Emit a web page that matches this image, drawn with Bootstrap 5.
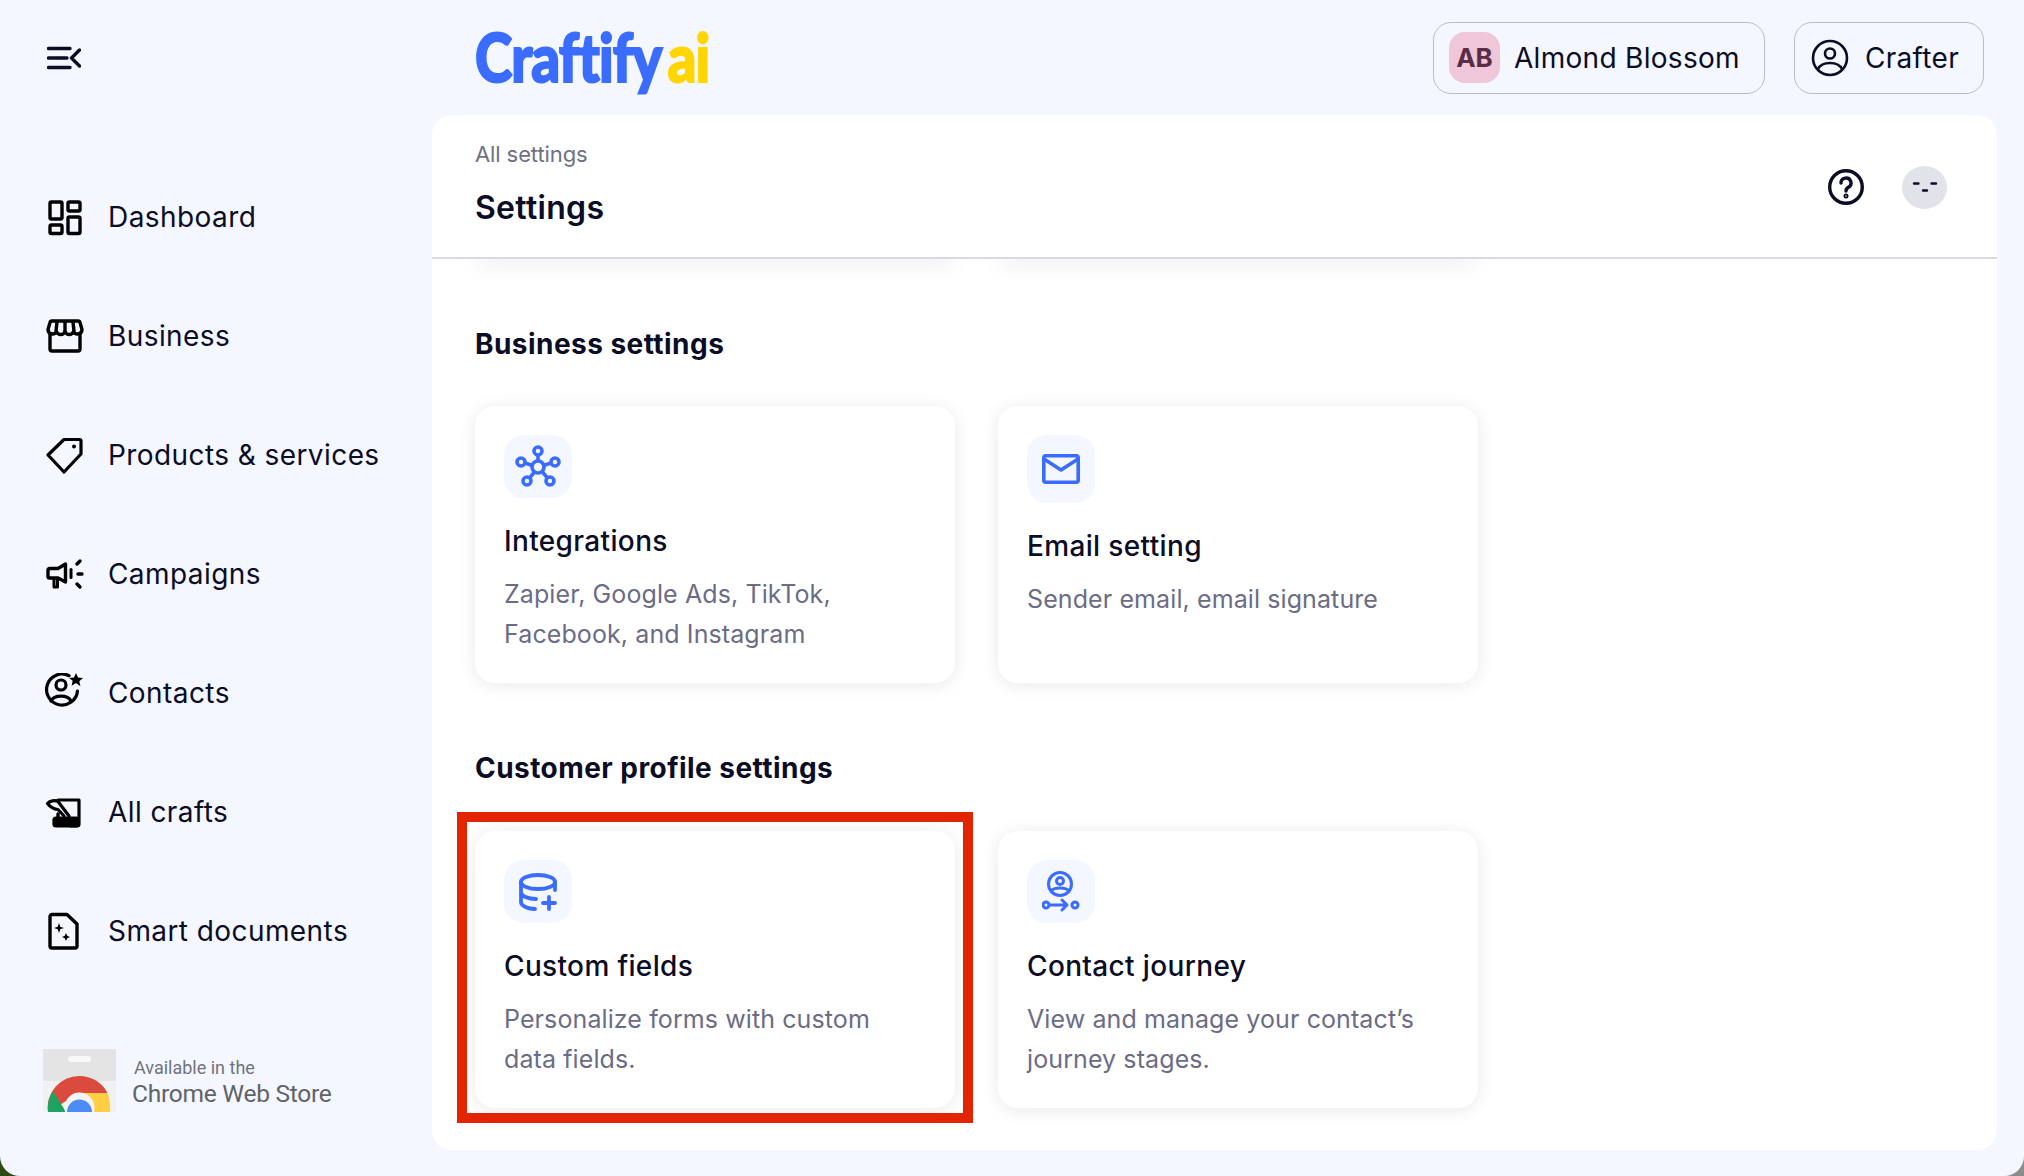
<!DOCTYPE html>
<html lang="en"><head><meta charset="utf-8"><title>Settings</title>
<link href="https://cdn.jsdelivr.net/npm/bootstrap@5.3.0/dist/css/bootstrap.min.css" rel="stylesheet">
<style>
html,body{height:100%;}
body{background:linear-gradient(to right,#2f4a12 0 50%,#8c8c8c 50% 100%);font-family:"Inter","Liberation Sans",sans-serif;color:#0b0c26;overflow:hidden;}
.appframe{position:relative;height:1176px;width:2024px;background:#f4f7ff;border-radius:0 0 20px 20px;}
.sidebar{width:432px;flex:none;height:1176px;}
.menu-btn{height:115px;padding:0 0 0 47px;}
.side-nav{padding-top:42px;}
.side-link{height:119px;padding-left:44px;font-size:28px;letter-spacing:.42px;color:#0b0c26;text-decoration:none;}
.side-icon{width:40px;height:40px;margin-right:24px;flex:none;}
.store{padding-left:43px;margin-top:-7px;}
.store-txt{margin-left:16px;font-family:Roboto,"Liberation Sans",sans-serif;color:#5f6368;line-height:1;margin-top:4px;}
.store-txt .l1{font-size:18px;padding-left:2px;margin-bottom:5px;color:#70737a;}
.store-txt .l2{font-size:24.5px;letter-spacing:-.25px;}
.content-col{width:1565px;flex:none;}
.topbar{height:115px;padding-left:43px;padding-right:13px;}
.logo{font-family:Lato,"Liberation Sans",sans-serif;font-weight:900;font-size:66px;line-height:1;color:#3a6cff;letter-spacing:-1px;-webkit-text-stroke:2px currentColor;transform:scaleX(.855);transform-origin:left center;margin-top:-1px;}
.logo span{color:#ffd600;margin-left:7px;}
.pill{height:72px;border:1px solid #b9bccb;border-radius:18px;font-size:28px;letter-spacing:.3px;color:#0b0c26;}
.pill-a{width:332px;padding-left:15px;margin-right:29px;}
.pill-b{width:190px;padding-left:16px;}
.avatar{width:51px;height:51px;border-radius:16px;background:#efc7d8;color:#5a2d45;font-weight:700;font-size:26px;margin-right:14px;letter-spacing:0;}
.panel{background:#fff;border-radius:20px;height:1035px;overflow:hidden;}
.panel-head{height:144px;border-bottom:2px solid #d9d9e4;padding:0 50px 0 43px;}
.crumb{font-size:22px;letter-spacing:-.1px;color:#6f7085;line-height:26px;padding-top:26px;}
.page-title{font-size:32px;font-weight:600;letter-spacing:.3px;line-height:40px;margin:21px 0 0;}
.help{margin-right:38px;margin-top:1px;}
.face{width:45px;height:43px;border-radius:50%;background:#e2e3ea;margin-top:2px;}
.panel-body{padding:0 43px;height:891px;overflow:hidden;}
.peek{margin-top:-14px;gap:43px;}
.peek > div{width:480px;height:14px;background:#fff;border-radius:20px;box-shadow:0 4px 24px rgba(20,20,60,.09);}
.sect{font-size:28px;font-weight:700;letter-spacing:.45px;line-height:36px;margin:0;}
.sect-a{margin-top:67px;}
.sect-b{margin-top:67px;}
.tiles{display:grid;grid-template-columns:480px 480px;gap:43px;margin-top:44px;}
.sect-b + .tiles{margin-top:45px;}
.tile{height:277px;border-radius:20px;border:0;box-shadow:0 2px 18px rgba(20,20,60,.09);padding:29px;}
.tile-ic{width:68px;height:65px;border-radius:20px;background:#f4f7ff;}
.tile-ic.tall{height:68px;}
.tile h3{font-size:28px;font-weight:500;letter-spacing:.35px;line-height:36px;margin:25px 0 0;}
.tile p{font-size:25px;letter-spacing:.1px;line-height:39.5px;color:#6b6c86;margin:16px 0 0;}
.callout{position:absolute;left:457px;top:812px;width:516px;height:311px;border:10px solid #e32400;pointer-events:none;}
</style></head>
<body>
<div class="appframe d-flex">
<aside class="sidebar d-flex flex-column">
  <div class="menu-btn d-flex align-items-center">
    <svg width="34" height="24" viewBox="0 0 34 24" fill="none" stroke="#0b0c26" stroke-width="3.4" stroke-linecap="round" stroke-linejoin="round"><path d="M1.500 2.500H23M1.500 12H20M1.500 21.500H23M32.500 4 24.500 12l8 8"/></svg>
  </div>
  <nav class="side-nav flex-grow-1">
    <a class="side-link d-flex align-items-center" href="#"><svg class="side-icon" viewBox="0 0 40 40" fill="none" stroke="#000" stroke-width="3.400" stroke-linejoin="round"><rect x="6" y="5" width="12" height="17" rx="1.500"/><rect x="24" y="5" width="12" height="9" rx="1.500"/><rect x="6" y="28" width="12" height="8.500" rx="1.500"/><rect x="24" y="20" width="12" height="16.500" rx="1.500"/></svg>Dashboard</a>
    <a class="side-link d-flex align-items-center" href="#"><svg class="side-icon" viewBox="-1 0 40 40" fill="none" stroke="#000" stroke-width="3.400" stroke-linejoin="round" stroke-linecap="round"><path d="M5 18V33a2 2 0 0 0 2 2H33a2 2 0 0 0 2-2V18"/><path d="M7 5H33a2 2 0 0 1 2 1.500l2 7a4.500 4.500 0 0 1-8.500 2 4.500 4.500 0 0 1-8.500 0 4.500 4.500 0 0 1-8.500 0 4.500 4.500 0 0 1-8.500-2l2-7A2 2 0 0 1 7 5Z"/><path d="M12 6l-1 9M20 6v9M28 6l1 9"/></svg>Business</a>
    <a class="side-link d-flex align-items-center" href="#"><svg class="side-icon" viewBox="1 0 40 40" fill="none" stroke="#000" stroke-width="3.200" stroke-linejoin="round"><path d="M5 20 21 4.500H36.500a1.500 1.500 0 0 1 1.500 1.500V19L21 37Z"/><circle cx="31" cy="11.500" r="2" fill="#000" stroke="none"/></svg>Products &amp; services</a>
    <a class="side-link d-flex align-items-center" href="#"><svg class="side-icon" viewBox="0 0 40 40" fill="none" stroke="#000" stroke-width="3.400" stroke-linecap="round" stroke-linejoin="round"><path d="M4 16a1.500 1.500 0 0 1 1.500-1.500H14L21.500 10V28L14 24H5.500A1.500 1.500 0 0 1 4 22.500Z"/><path d="M10 25v8h3.500v-8" stroke-width="3"/><path d="M27 15.500v8" stroke-width="3"/><path d="M33 10l3-3M34 20h4M33 30l3 3"/></svg>Campaigns</a>
    <a class="side-link d-flex align-items-center" href="#"><svg class="side-icon" viewBox="0 1 40 40" fill="none" stroke="#000" stroke-width="3.200" stroke-linecap="round" stroke-linejoin="round"><path d="M25 3.700A15.500 15.500 0 1 0 33.500 19"/><circle cx="17" cy="13" r="5"/><path d="M7 29c3-6.500 17-6.500 20 0"/><path d="M32 1l2 4.500 5 .5-3.700 3.300 1.100 4.900L32 11.100l-4.400 2.600 1.100-4.900L25 6l5-.5Z" fill="#000" stroke="none"/></svg>Contacts</a>
    <a class="side-link d-flex align-items-center" href="#"><svg class="side-icon" viewBox="0 0 40 40" fill="none" stroke="#000" stroke-width="3.200" stroke-linecap="round" stroke-linejoin="round"><path d="M14 8H35V32a2 2 0 0 1-2 2H27"/><path d="M3.500 11.500C6 8.500 11 8 14 9.500L25 24M3.500 11.500C6 15 11 17.500 14 17.500L20 24"/><rect x="10" y="26" width="24" height="8" rx="2" fill="#000"/><path d="M14 26v-4" stroke-width="3.400"/></svg>All crafts</a>
    <a class="side-link d-flex align-items-center" href="#"><svg class="side-icon" viewBox="0 0 40 40" fill="none" stroke="#000" stroke-width="3.400" stroke-linejoin="round"><path d="M8 3.500H23L33 13V35a2 2 0 0 1-2 2H8a2 2 0 0 1-2-2V5.500a2 2 0 0 1 2-2Z"/><path d="M15 12l1.300 3.700 3.700 1.300-3.700 1.300L15 22l-1.300-3.700L10 17l3.700-1.300ZM22 22l1.200 2.800L26 26l-2.800 1.200L22 30l-1.200-2.800L18 26l2.800-1.200Z" fill="#000" stroke="none"/></svg>Smart documents</a>
  </nav>
  <div class="store d-flex align-items-center mb-5 pb-3">
    <svg width="73" height="63" viewBox="0 0 73 63"><rect width="73" height="32" fill="#e4e4e4"/><rect y="32" width="73" height="31" rx="2" fill="#f1f1f1"/><rect x="25" y="7" width="23" height="6" rx="3" fill="#f8f8f8"/><path d="M5 63A31.500 31.500 0 0 1 36.500 27 31.500 31.500 0 0 1 64.500 44H36.500Z" fill="#db4a3f"/><path d="M5 63A31.500 31.500 0 0 1 10 42L23 63Z" fill="#1ea362"/><path d="M36 44H64.500Q68 53 67 63H48Q48 48 36 44Z" fill="#ffce43"/><circle cx="36.500" cy="58.500" r="15" fill="#f4f4f4"/><path d="M24 63a12.500 12.500 0 1 1 25 0Z" fill="#4d8bf5"/></svg>
    <div class="store-txt"><div class="l1">Available in the</div><div class="l2">Chrome Web Store</div></div>
  </div>
</aside>
<div class="content-col d-flex flex-column">
  <header class="topbar d-flex align-items-center justify-content-between">
    <div class="logo">Craftify<span>ai</span></div>
    <div class="d-flex">
      <div class="pill pill-a d-flex align-items-center"><span class="avatar d-flex align-items-center justify-content-center">AB</span>Almond Blossom</div>
      <div class="pill pill-b d-flex align-items-center"><svg class="me-3" width="38" height="38" viewBox="0 0 38 38" fill="none" stroke="#0b0c26" stroke-width="2.600"><circle cx="19" cy="19" r="17"/><circle cx="19" cy="14.500" r="5"/><path d="M7 30c4-8 20-8 24 0"/></svg>Crafter</div>
    </div>
  </header>
  <main class="panel">
    <div class="panel-head d-flex justify-content-between align-items-start">
      <div><div class="crumb">All settings</div><h1 class="page-title">Settings</h1></div>
      <div class="d-flex align-items-center h-100">
        <svg class="help" width="36" height="36" viewBox="0 0 36 36" fill="none" stroke="#0b0c26" stroke-width="3.400" stroke-linecap="round"><circle cx="18" cy="18" r="16.300"/><path d="M13 14a5 5 0 1 1 7.500 4.300c-1.700 1-2.500 1.900-2.500 3.700"/><circle cx="18" cy="27" r=".8" fill="#0b0c26"/></svg>
        <div class="face d-flex align-items-center justify-content-center"><svg width="26" height="12" viewBox="0 0 26 12" stroke="#0b0c26" stroke-width="2.400" stroke-linecap="round"><path d="M2 2.500H6.500M19.500 2.500H24M11 9.500H15"/></svg></div>
      </div>
    </div>
    <div class="panel-body">
      <div class="peek d-flex"><div></div><div></div></div>
      <h2 class="sect sect-a">Business settings</h2>
      <div class="tiles">
        <div class="card tile"><div class="tile-ic d-flex align-items-center justify-content-center"><svg width="46" height="44" viewBox="0 0 46 44" fill="none" stroke="#3a6cff" stroke-width="3.600"><circle cx="23" cy="22" r="6"/><circle cx="23" cy="6" r="4"/><circle cx="6" cy="17" r="4"/><circle cx="40" cy="17" r="4"/><circle cx="12" cy="36" r="4"/><circle cx="35" cy="36" r="4"/><path d="M23 10v6M10 18l7.500 2.500M36 18l-7.500 2.500M14.500 33l5-6M32.500 33l-5-6"/></svg></div><h3>Integrations</h3><p>Zapier, Google Ads, TikTok,<br>Facebook, and Instagram</p></div>
        <div class="card tile"><div class="tile-ic tall d-flex align-items-center justify-content-center"><svg width="38" height="30" viewBox="0 0 38 30" fill="none" stroke="#3a6cff" stroke-width="3.600" stroke-linejoin="round"><rect x="1.800" y="1.800" width="34.400" height="26.400" rx="2"/><path d="M2 5l17 11L36 5"/></svg></div><h3>Email setting</h3><p>Sender email, email signature</p></div>
      </div>
      <h2 class="sect sect-b">Customer profile settings</h2>
      <div class="tiles">
        <div class="card tile"><div class="tile-ic d-flex align-items-center justify-content-center"><svg width="38" height="38" viewBox="0 0 38 38" fill="none" stroke="#3a6cff" stroke-width="3.800" stroke-linecap="round"><ellipse cx="19" cy="9" rx="17" ry="7"/><path d="M2 9v20c0 4 7 7 14 7M2 19c0 4 7 7 15 7M36 9v8M30 24v12M24 30h12"/></svg></div><h3>Custom fields</h3><p>Personalize forms with custom<br>data fields.</p></div>
        <div class="card tile"><div class="tile-ic d-flex align-items-center justify-content-center"><svg width="38" height="42" viewBox="0 0 38 42" fill="none" stroke="#3a6cff" stroke-width="3" stroke-linecap="round" stroke-linejoin="round"><circle cx="18" cy="13" r="11.500"/><circle cx="18" cy="10" r="3.500"/><path d="M9 20c3-4 15-4 18 0"/><circle cx="4" cy="34" r="3"/><circle cx="33" cy="34" r="3"/><path d="M7 34H25M20 29l5 5-5 5"/></svg></div><h3>Contact journey</h3><p>View and manage your contact’s<br>journey stages.</p></div>
      </div>
    </div>
  </main>
</div>
<div class="callout"></div>
</div>
<script src="https://cdn.jsdelivr.net/npm/bootstrap@5.3.0/dist/js/bootstrap.bundle.min.js"></script>
</body></html>
